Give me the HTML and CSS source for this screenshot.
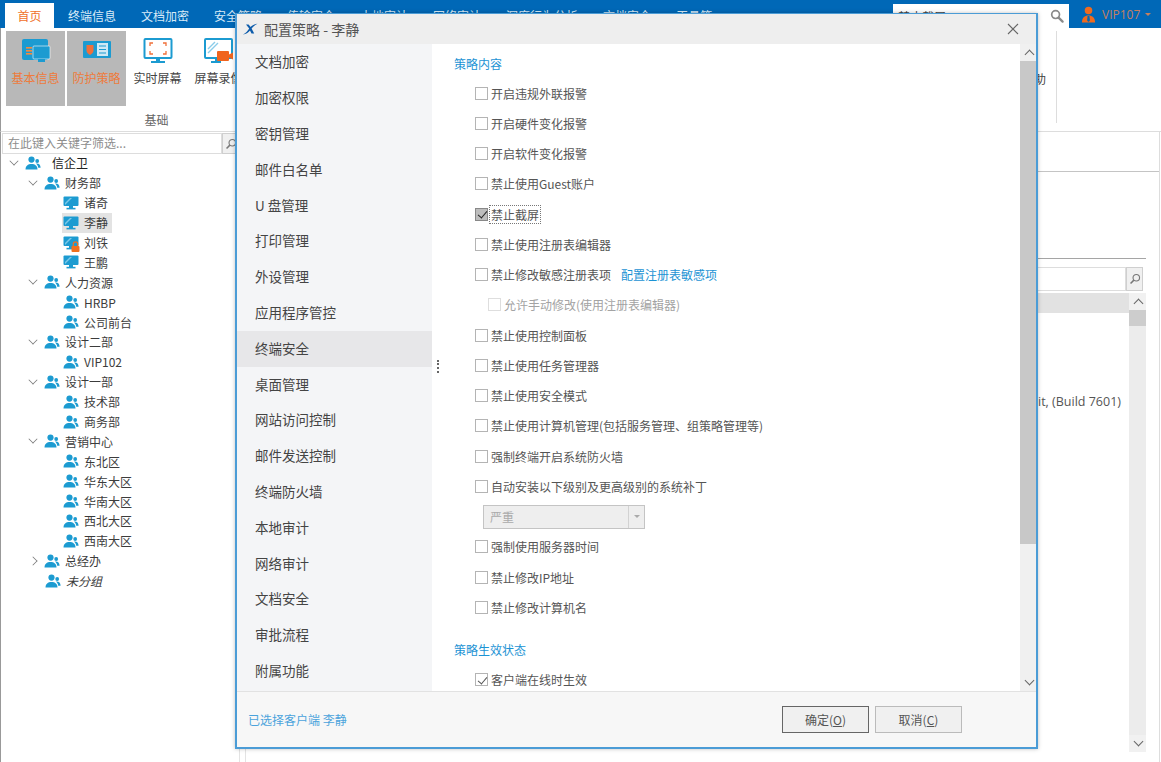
FILE: index.html
```html
<!DOCTYPE html>
<html lang="zh-CN">
<head>
<meta charset="utf-8">
<title>配置策略</title>
<link rel="stylesheet" href="styles.css">
</head>
<body>
<svg class="defs" width="0" height="0" aria-hidden="true">
  <symbol id="people" viewBox="0 0 16 14">
    <circle cx="6.5" cy="3.6" r="3.1" fill="#1c9bd1"/>
    <path d="M0.5 13.5c0-3.8 2.4-5.6 6-5.6s6 1.8 6 5.6z" fill="#1c9bd1"/>
    <circle cx="12.2" cy="5" r="1.9" fill="#1c9bd1"/>
    <path d="M11 7.6c2.6-.4 4.6 1 4.6 4.2h-2.4c-.1-1.7-.9-3.1-2.2-4.2z" fill="#1c9bd1"/>
  </symbol>
  <symbol id="pc" viewBox="0 0 16 14">
    <rect x="0.5" y="0.5" width="15" height="9.6" rx="1" fill="#1c9bd1"/>
    <path d="M2 7l5-5h2L2 9z" fill="#7cc8e8"/>
    <rect x="6" y="10" width="4" height="2" fill="#1c9bd1"/>
    <rect x="3.5" y="11.8" width="9" height="1.6" fill="#1c9bd1"/>
  </symbol>
</svg>
<div class="app">
  <header class="topbar">
    <nav class="tabs">
      <span class="tab active">首页</span>
      <span class="tab">终端信息</span>
      <span class="tab">文档加密</span>
      <span class="tab">安全策略</span>
      <span class="tab">传输安全</span>
      <span class="tab">本地审计</span>
      <span class="tab">网络审计</span>
      <span class="tab">深度行为分析</span>
      <span class="tab">文档安全</span>
      <span class="tab">工具箱</span>
    </nav>
    <div class="topsearch">
      <span>禁止截屏</span>
      <svg class="topsearch-icon" viewBox="0 0 14 14"><circle cx="5.6" cy="5.6" r="3.9" fill="none" stroke="#8a8a8a" stroke-width="1.7"/><path d="M8.6 8.6l4 4" stroke="#8a8a8a" stroke-width="2.2" stroke-linecap="round"/></svg>
    </div>
    <div class="user">
      <svg class="user-icon" viewBox="0 0 16 18"><circle cx="8" cy="4.6" r="4" fill="#f06a1e"/><path d="M1 17.500c0-5 2.600-7.500 7-7.500s7 2.500 7 7.500z" fill="#f06a1e"/><path d="M7 10.500h2l.5 5-1.500 1.500-1.500-1.500z" fill="#0068b7"/></svg>
      <span>VIP107</span>
      <i class="caret"></i>
    </div>
  </header>

  <section class="ribbon">
    <div class="ribbon-group">
      <div class="ribbon-items">
        <div class="rib-item on">
          <svg viewBox="0 0 30 26"><rect x="1" y="1" width="26" height="21" rx="2" fill="#1c9bd1"/><rect x="5" y="9" width="6" height="1.600" fill="#f58a3c"/><rect x="5" y="12" width="6" height="1.600" fill="#f58a3c"/><rect x="5" y="15" width="6" height="1.600" fill="#f58a3c"/><rect x="12" y="8" width="17" height="13" rx="1" fill="#1c9bd1" stroke="#fff" stroke-width=".6"/><rect x="17" y="21" width="7" height="3" fill="#1c9bd1"/></svg>
          <span>基本信息</span>
        </div>
        <div class="rib-item on">
          <svg viewBox="0 0 30 26"><rect x="1" y="3" width="28" height="17" rx="1" fill="#1c9bd1"/><path d="M4.500 7h7v5.500c0 2-2 3.500-3.500 4.500-1.500-1-3.500-2.500-3.500-4.500z" fill="#f0703a"/><rect x="15" y="5" width="11" height="13" fill="#cfe9f5"/><path d="M17 8h7M17 11.500h7M17 15h7" stroke="#1c9bd1" stroke-width="1.200"/></svg>
          <span>防护策略</span>
        </div>
        <div class="rib-item">
          <svg viewBox="0 0 30 26"><rect x="1.500" y="1" width="27" height="19" rx="1" fill="none" stroke="#1c9bd1" stroke-width="2"/><path d="M7 8V5h3M20 5h3v3M23 13v3h-3M10 16H7v-3" fill="none" stroke="#f0703a" stroke-width="1.300"/><rect x="13" y="20" width="4" height="3" fill="#1c9bd1"/><rect x="8" y="23" width="14" height="2" fill="#1c9bd1"/></svg>
          <span>实时屏幕</span>
        </div>
        <div class="rib-item">
          <svg viewBox="0 0 30 26"><rect x="1" y="1" width="27" height="19" rx="1" fill="none" stroke="#1c9bd1" stroke-width="2"/><path d="M4 11l7-7M4 15l10-10" stroke="#8accea" stroke-width="1.400"/><rect x="11" y="20" width="4" height="3" fill="#1c9bd1"/><rect x="7" y="23" width="10" height="2" fill="#1c9bd1"/><rect x="13" y="13" width="12" height="10" rx="1" fill="#f0641e"/><path d="M25 16.500l4-2v7l-4-2z" fill="#f0641e"/></svg>
          <span>屏幕录像</span>
        </div>
      </div>
      <div class="ribbon-caption">基础</div>
    </div>
    <div class="ribbon-end"><span>帮助</span><i class="ribbon-sep"></i></div>
  </section>

  <main class="workspace">
    <aside class="left">
      <div class="filter">
        <span class="filter-input">在此键入关键字筛选...</span>
        <span class="filter-btn"><svg viewBox="0 0 14 14"><circle cx="8.500" cy="5.500" r="3.800" fill="none" stroke="#777" stroke-width="1.300"/><path d="M5.700 8.300L1.800 12.200" stroke="#777" stroke-width="1.800"/></svg></span>
      </div>
      <ul class="tree">
        <li class="node l0"><i class="chev down"></i><svg class="ticon"><use href="#people"/></svg><span class="root-label">信企卫</span></li>
        <li class="node l1"><i class="chev down"></i><svg class="ticon"><use href="#people"/></svg><span>财务部</span></li>
        <li class="node l2"><svg class="ticon"><use href="#pc"/></svg><span>诸奇</span></li>
        <li class="node l2 selected"><svg class="ticon"><use href="#pc"/></svg><span>李静</span></li>
        <li class="node l2"><span class="lockwrap"><svg class="ticon"><use href="#pc"/></svg><svg class="lock" viewBox="0 0 9 11"><path d="M2.300 5.500V3a2.200 2.200 0 0 1 4.400 0v2.500" fill="none" stroke="#f0701e" stroke-width="1.200"/><rect x="0.500" y="5" width="8" height="6" rx="1" fill="#f0701e"/></svg></span><span>刘铁</span></li>
        <li class="node l2"><svg class="ticon"><use href="#pc"/></svg><span>王鹏</span></li>
        <li class="node l1"><i class="chev down"></i><svg class="ticon"><use href="#people"/></svg><span>人力资源</span></li>
        <li class="node l2"><svg class="ticon"><use href="#people"/></svg><span>HRBP</span></li>
        <li class="node l2"><svg class="ticon"><use href="#people"/></svg><span>公司前台</span></li>
        <li class="node l1"><i class="chev down"></i><svg class="ticon"><use href="#people"/></svg><span>设计二部</span></li>
        <li class="node l2"><svg class="ticon"><use href="#people"/></svg><span>VIP102</span></li>
        <li class="node l1"><i class="chev down"></i><svg class="ticon"><use href="#people"/></svg><span>设计一部</span></li>
        <li class="node l2"><svg class="ticon"><use href="#people"/></svg><span>技术部</span></li>
        <li class="node l2"><svg class="ticon"><use href="#people"/></svg><span>商务部</span></li>
        <li class="node l1"><i class="chev down"></i><svg class="ticon"><use href="#people"/></svg><span>营销中心</span></li>
        <li class="node l2"><svg class="ticon"><use href="#people"/></svg><span>东北区</span></li>
        <li class="node l2"><svg class="ticon"><use href="#people"/></svg><span>华东大区</span></li>
        <li class="node l2"><svg class="ticon"><use href="#people"/></svg><span>华南大区</span></li>
        <li class="node l2"><svg class="ticon"><use href="#people"/></svg><span>西北大区</span></li>
        <li class="node l2"><svg class="ticon"><use href="#people"/></svg><span>西南大区</span></li>
        <li class="node l1"><i class="chev right"></i><svg class="ticon"><use href="#people"/></svg><span>总经办</span></li>
        <li class="node l1 nochev"><svg class="ticon"><use href="#people"/></svg><em>未分组</em></li>
      </ul>
    </aside>
    <section class="main">
      <div class="tabstrip"></div>
      <div class="main-inner">
        <div class="main-top"></div>
        <div class="main-list">
          <div class="list-search"><span class="list-search-input"></span><span class="filter-btn list-btn"><svg viewBox="0 0 14 14"><circle cx="8.500" cy="5.500" r="3.800" fill="none" stroke="#777" stroke-width="1.300"/><path d="M5.700 8.300L1.800 12.200" stroke="#777" stroke-width="1.800"/></svg></span></div>
          <div class="list-body">
            <div class="list-content">
              <div class="list-head"></div>
              <div class="list-info">Windows 7 Professional 64-bit, (Build 7601)</div>
            </div>
            <div class="vscroll outer">
              <i class="sarrow up"></i><i class="outer-thumb"></i><i class="sfill"></i><i class="sarrow dn"></i>
            </div>
          </div>
        </div>
      </div>
    </section>
  </main>

  <div class="dialog" role="dialog">
    <div class="dlg-title">
      <svg class="logo" viewBox="0 0 16 12"><path d="M1 11.500C4 10 6 7.500 7.200 5.500L4 1.500h2.600l2 2.600C10 2.500 12.500 1 15.500.8 12.800 2 11 3.800 9.600 5.600l2.600 4.900H9.500L8 7.500c-1.800 2.400-4 3.600-7 4z" fill="#0d5cab"/></svg>
      <span class="dlg-name">配置策略 - 李静</span>
      <svg class="close" viewBox="0 0 12 12"><path d="M1 1l10 10M11 1L1 11" stroke="#666" stroke-width="1.100"/></svg>
    </div>
    <div class="dlg-body">
      <nav class="dlg-menu">
        <a>文档加密</a><a>加密权限</a><a>密钥管理</a><a>邮件白名单</a><a>U 盘管理</a><a>打印管理</a><a>外设管理</a><a>应用程序管控</a><a class="cur">终端安全</a><a>桌面管理</a><a>网站访问控制</a><a>邮件发送控制</a><a>终端防火墙</a><a>本地审计</a><a>网络审计</a><a>文档安全</a><a>审批流程</a><a>附属功能</a>
        <span class="splitter"></span>
      </nav>
      <div class="dlg-content">
        <div class="policy">
          <h3 class="sec">策略内容</h3>
          <label class="row"><i class="cb"></i>开启违规外联报警</label>
          <label class="row"><i class="cb"></i>开启硬件变化报警</label>
          <label class="row"><i class="cb"></i>开启软件变化报警</label>
          <label class="row"><i class="cb"></i>禁止使用Guest账户</label>
          <label class="row"><i class="cb checked dark"></i><span class="focus">禁止截屏</span></label>
          <label class="row"><i class="cb"></i>禁止使用注册表编辑器</label>
          <label class="row"><i class="cb"></i>禁止修改敏感注册表项<a class="link">配置注册表敏感项</a></label>
          <label class="row sub"><i class="cb faint"></i>允许手动修改(使用注册表编辑器)</label>
          <label class="row"><i class="cb"></i>禁止使用控制面板</label>
          <label class="row"><i class="cb"></i>禁止使用任务管理器</label>
          <label class="row"><i class="cb"></i>禁止使用安全模式</label>
          <label class="row"><i class="cb"></i>禁止使用计算机管理(包括服务管理、组策略管理等)</label>
          <label class="row"><i class="cb"></i>强制终端开启系统防火墙</label>
          <label class="row"><i class="cb"></i>自动安装以下级别及更高级别的系统补丁</label>
          <div class="row combo-row"><div class="combo"><span>严重</span><b class="combo-btn"><i></i></b></div></div>
          <label class="row"><i class="cb"></i>强制使用服务器时间</label>
          <label class="row"><i class="cb"></i>禁止修改IP地址</label>
          <label class="row"><i class="cb"></i>禁止修改计算机名</label>
          <h3 class="sec sec2">策略生效状态</h3>
          <label class="row"><i class="cb checked"></i>客户端在线时生效</label>
        </div>
        <div class="vscroll inner">
          <i class="sarrow up"></i><i class="inner-thumb"></i><i class="sfill"></i><i class="sarrow dn"></i>
        </div>
      </div>
    </div>
    <div class="dlg-foot">
      <span class="selected-note">已选择客户端 李静</span>
      <div class="btns">
        <button class="btn primary">确定(<u>O</u>)</button>
        <button class="btn">取消(<u>C</u>)</button>
      </div>
    </div>
  </div>
</div>
</body>
</html>
```
FILE: styles.css
```css
* { box-sizing: border-box; }
html, body { margin: 0; padding: 0; height: 100%; overflow: hidden; background: #fff; }
body { font-family: "Noto Sans CJK SC", "Liberation Sans", sans-serif; font-size: 12px; color: #444; }
.defs { position: absolute; }
ul { list-style: none; margin: 0; padding: 0; }
i { display: block; font-style: normal; }

.app { position: relative; width: 1161px; height: 762px; display: flex; flex-direction: column; overflow: hidden; }

.topbar { height: 28px; flex: none; background: #0068b7; display: flex; padding: 3px 0 0 5px; }
.tabs { display: flex; flex: 1; gap: 25px; font-size: 12px; }
.tab { color: #d9ebf7; line-height: 25px; white-space: nowrap; }
.tab.active { background: #fff; color: #f0702a; width: 49px; text-align: center; margin-right: -11px; }
.topsearch { width: 176px; height: 24px; margin-top: 1px; background: #fff; display: flex; align-items: center; justify-content: space-between; padding: 0 5px; color: #444; }
.topsearch-icon { width: 14px; height: 14px; }
.user { width: 92px; display: flex; align-items: center; padding: 0 0 3px 12px; gap: 6px; color: #c5805f; font-size: 12px; font-family: "Open Sans", "Liberation Sans", sans-serif; }
.user-icon { width: 15px; height: 17px; }
.caret { width: 0; height: 0; border: 3px solid transparent; border-top-color: #c5805f; border-bottom: 0; margin-left: -1px; }

.ribbon { height: 104px; flex: none; display: flex; justify-content: space-between; border-bottom: 1px solid #ddd; border-left: 1px solid #999; padding: 3px 0 0 5px; }
.ribbon-group { display: flex; flex-direction: column; }
.ribbon-items { display: flex; gap: 2px; height: 75px; }
.rib-item { width: 59px; display: flex; flex-direction: column; align-items: center; padding-top: 7px; color: #444; white-space: nowrap; }
.rib-item svg { width: 30px; height: 26px; margin-bottom: 5px; }
.rib-item.on { background: #b8b8b8; color: #ee7b3c; }
.ribbon-caption { text-align: center; width: 301px; padding-top: 5px; color: #666; }
.ribbon-end { display: flex; width: 148px; height: 92px; align-items: flex-start; justify-content: space-between; padding: 0 104px 0 0; color: #444; }
.ribbon-end span { margin-top: 39px; margin-left: 9px; white-space: nowrap; }
.ribbon-sep { width: 1px; height: 92px; background: #ddd; }

.workspace { flex: 1; display: flex; min-height: 0; border-left: 1px solid #999; padding-right: 1px; }
.left { width: 239px; flex: none; border-right: 1px solid #e3e3e3; }
.filter { display: flex; height: 21px; margin: 1px 0 0 1px; }
.filter-input { flex: 1; background: #fff; border: 1px solid #ddd; line-height: 18px; padding-left: 5px; color: #8d8d8d; }
.filter-btn { width: 17px; background: #f0f0f0; border: 1px solid #cfcfcf; display: flex; align-items: center; justify-content: center; }
.filter-btn svg { width: 12px; height: 12px; }
.tree { margin-top: -1px; }
.node { height: 19.9px; display: flex; align-items: center; white-space: nowrap; color: #3c3c3c; }
.l0 { padding-left: 9px; color: #222; }
.l1 { padding-left: 28px; }
.l2 { padding-left: 62px; }
.nochev { padding-left: 44px; }
.chev { width: 8px; height: 8px; border-right: 1.5px solid #777; border-bottom: 1.5px solid #777; margin-right: 7px; }
.chev.down { transform: translateY(-2px) rotate(45deg) scale(.8); }
.chev.right { transform: rotate(-45deg) scale(.8); }
.ticon { width: 16px; height: 14px; margin-right: 5px; flex: none; }
.root-label { margin-left: 6px; }
.selected { position: relative; }
.selected span { position: relative; }
.selected::before { content: ""; position: absolute; left: 61px; width: 50px; top: 0; bottom: 0; background: #e3e3e3; }
.selected .ticon { position: relative; }
.lockwrap { position: relative; display: flex; }
.lock { position: absolute; width: 9px; height: 11px; right: 4px; bottom: -2px; }
em { font-style: italic; }

.main { flex: 1; display: flex; flex-direction: column; min-width: 0; border-right: 1px solid #ddd; }
.tabstrip { height: 40px; flex: none; border-bottom: 1px solid #c4c4c4; margin-left: 5px; }
.main-inner { flex: 1; display: flex; flex-direction: column; padding: 0 13px 0 5px; min-height: 0; }
.main-top { height: 87px; border-bottom: 1px solid #a5a5a5; flex: none; border-left: 1px solid #e3e3e3; }
.main-list { flex: 1; display: flex; flex-direction: column; border-left: 1px solid #e3e3e3; padding-top: 8px; min-height: 0; }
.list-search { display: flex; height: 24px; padding-right: 3px; }
.list-search-input { flex: 1; border: 1px solid #ddd; }
.list-btn { width: 17px; }
.list-body { flex: 1; display: flex; padding-top: 2px; padding-bottom: 10px; min-height: 0; }
.list-content { flex: 1; min-width: 0; }
.list-head { height: 20px; background: #e2e2e2; }
.list-info { margin-top: 80px; text-align: right; padding-right: 8px; color: #555; font-family: "Open Sans", "Liberation Sans", sans-serif; font-size: 12.5px; white-space: nowrap; direction: rtl; }

.vscroll { width: 17px; display: flex; flex-direction: column; background: #ececec; flex: none; }
.sarrow { height: 17px; flex: none; position: relative; background: #f1f1f1; }
.sarrow::after { content: ""; position: absolute; left: 6px; width: 6px; height: 6px; border-left: 1.500px solid #666; border-top: 1.500px solid #666; }
.sarrow.up::after { top: 7px; transform: rotate(45deg); }
.sarrow.dn::after { top: 3px; transform: rotate(225deg); }
.sfill { flex: 1; }
.outer-thumb { height: 16px; background: #cdcdcd; flex: none; }

.dialog { position: absolute; left: 235px; top: 13px; width: 803px; height: 736px; background: #fff; border: 2px solid #4b9cd6; border-top-width: 1px; display: flex; flex-direction: column; box-shadow: 0 0 4px rgba(0,0,0,.25); }
.dlg-title { height: 30px; flex: none; background: #eeeeee; display: flex; align-items: center; padding: 0 17px 0 5px; font-size: 14px; color: #555; }
.logo { width: 16px; height: 12px; margin-right: 6px; }
.dlg-name { flex: 1; }
.close { width: 12px; height: 12px; }
.dlg-body { flex: 1; display: flex; min-height: 0; }
.dlg-menu { width: 195px; flex: none; background: #f4f5f7; position: relative; display: flex; flex-direction: column; padding-top: 0.4px; }
.dlg-menu a { height: 35.8px; flex: none; line-height: 35.8px; padding-left: 18px; font-size: 13.500px; color: #444; }
.dlg-menu a.cur { background: #e7e7e9; }
.splitter { position: absolute; right: -7px; top: 316px; height: 13px; width: 2px; border-left: 2px dotted #666; }
.dlg-content { flex: 1; display: flex; min-width: 0; }
.policy { flex: 1; padding: 10px 0 0 22px; overflow: hidden; position: relative; }
.sec { margin: 0; font-weight: 400; font-size: 12px; color: #1c93d4; height: 20px; line-height: 20px; margin-bottom: 4px; }
.sec2 { margin-top: 17px; margin-bottom: 5px; }
.row { display: flex; align-items: center; height: 30.25px; padding-left: 21px; white-space: nowrap; color: #555; }
.row.sub { padding-left: 34px; color: #a3a3a3; }
.cb { width: 13px; height: 13px; border: 1px solid #b4b4b4; background: #fff; margin-right: 3px; flex: none; position: relative; }
.cb.faint { border-color: #dedede; }
.cb.checked::after { content: ""; position: absolute; left: 3.500px; top: 0.500px; width: 4px; height: 8px; border-right: 1.500px solid #555; border-bottom: 1.500px solid #555; transform: rotate(40deg); }
.cb.dark { background: #bdbdbd; border-color: #888; }
.cb.dark::after { border-color: #222; }
.focus { outline: 1px dotted #777; padding: 0 1px; margin-left: -1px; }
.link { color: #1c93d4; margin-left: 10px; }
.combo-row { padding-left: 29px; }
.combo { width: 162px; height: 24px; background: #eeeeee; border: 1px solid #c4c4c4; display: flex; align-items: center; justify-content: space-between; padding-left: 6px; color: #aaa; }
.combo-btn { width: 16px; height: 100%; border-left: 1px solid #d2d2d2; display: flex; align-items: center; justify-content: center; }
.combo-btn i { width: 0; height: 0; border: 3px solid transparent; border-top-color: #aaa; border-bottom: 0; }
.inner { width: 16px; }
.inner .sarrow { background: #f0f0f0; }
.inner-thumb { height: 483px; background: #c8c8c8; flex: none; }
.inner .sfill { background: #f0f0f0; }

.dlg-foot { height: 56px; flex: none; background: #f7f7f7; border-top: 1px solid #e2e2e2; display: flex; align-items: center; justify-content: space-between; padding: 0 74px 0 11px; }
.selected-note { color: #4ba3dc; }
.btns { display: flex; gap: 6px; }
.btn { width: 87px; height: 27px; background: #f0f0f0; border: 1px solid #bbb; font: inherit; color: #555; padding: 0; }
.btn.primary { border-color: #666; }
```
